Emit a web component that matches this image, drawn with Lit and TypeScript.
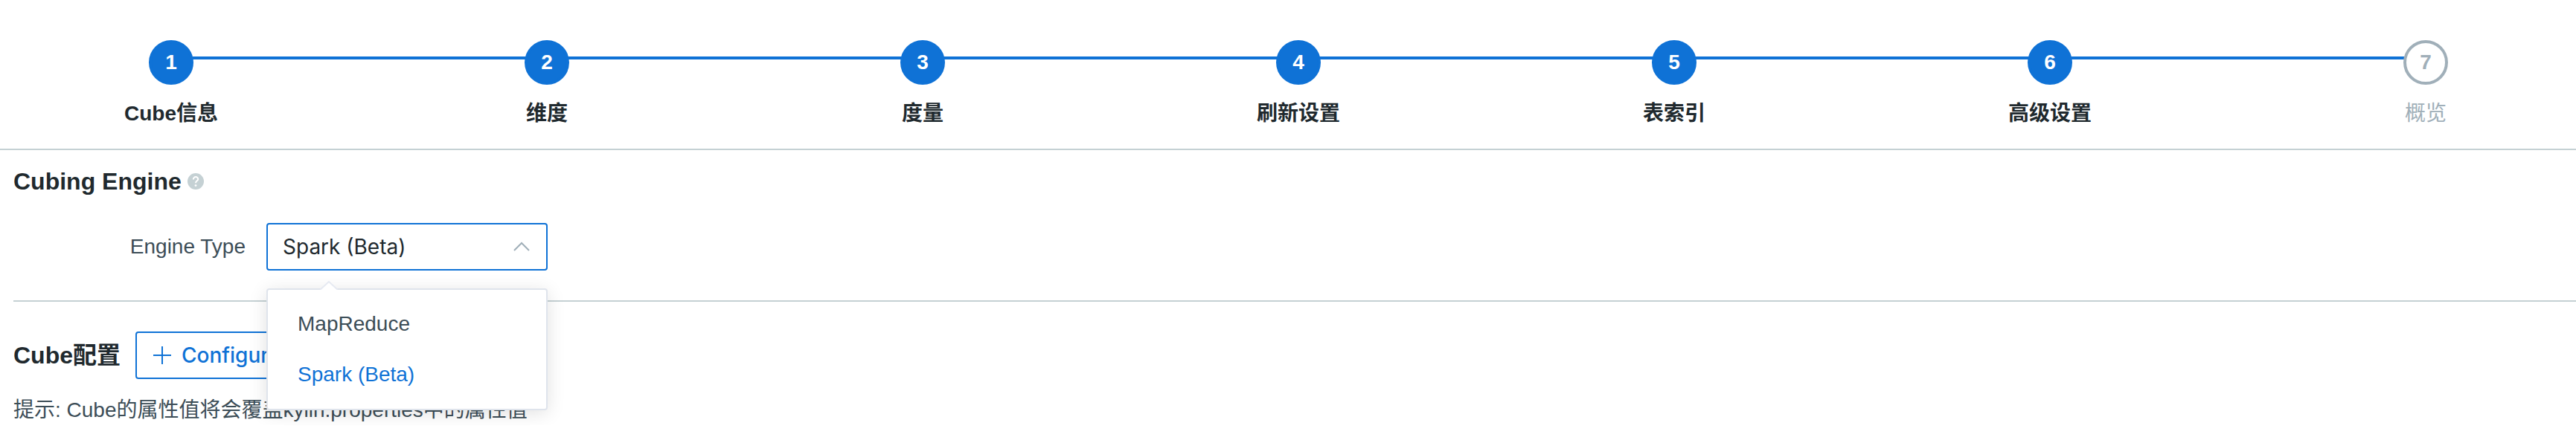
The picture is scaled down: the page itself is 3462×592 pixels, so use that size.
import { LitElement, html, css, svg } from "lit";
import { customElement, property, state } from "lit/decorators.js";
import { classMap } from "lit/directives/class-map.js";

interface Step {
  label: string;
  done: boolean;
}

const STEPS: Step[] = [
  { label: "Cube信息", done: true },
  { label: "维度", done: true },
  { label: "度量", done: true },
  { label: "刷新设置", done: true },
  { label: "表索引", done: true },
  { label: "高级设置", done: true },
  { label: "概览", done: false },
];

const ENGINES = ["MapReduce", "Spark (Beta)"];

@customElement("wizard-steps")
export class WizardSteps extends LitElement {
  @property({ attribute: false }) steps: Step[] = [];

  static styles = css`
    :host {
      display: block;
    }
    .steps {
      display: flex;
      align-items: flex-start;
      margin: 0;
      padding: 54px 172px 28px 200px;
      list-style: none;
      border-bottom: 2px solid #c5d1d4;
    }
    .step {
      display: flex;
      flex: 1 1 0;
      align-items: flex-start;
    }
    .step:last-child {
      flex: none;
    }
    .marker {
      display: flex;
      flex-direction: column;
      align-items: center;
      flex: none;
      gap: 20px;
      width: 60px;
      color: #a0afb9;
    }
    .circle {
      box-sizing: border-box;
      width: 60px;
      height: 60px;
      border: 4px solid currentColor;
      border-radius: 50%;
      font-weight: 700;
      line-height: 52px;
      text-align: center;
    }
    .label {
      line-height: 38px;
      white-space: nowrap;
    }
    .done .circle {
      border-color: #0f72d6;
      background: #0f72d6;
      color: #fff;
    }
    .done .label {
      color: #20292e;
      font-weight: 700;
    }
    .line {
      flex: 1;
      height: 4px;
      margin: 22px -1px 0;
      background: #0f72d6;
    }
  `;

  render() {
    return html`
      <ol class="steps">
        ${this.steps.map(
          (step, i) => html`
            <li class=${classMap({ step: true, done: step.done })}>
              <div class="marker">
                <span class="circle">${i + 1}</span>
                <span class="label">${step.label}</span>
              </div>
              ${i < this.steps.length - 1 ? html`<span class="line"></span>` : null}
            </li>
          `
        )}
      </ol>
    `;
  }
}

@customElement("engine-select")
export class EngineSelect extends LitElement {
  @property({ attribute: false }) options: string[] = [];
  @property() value = "";
  @property() label = "";
  @state() private open = true;

  static styles = css`
    :host {
      display: block;
    }
    .row {
      display: flex;
      align-items: center;
      gap: 28px;
    }
    .name {
      width: 312px;
      text-align: right;
    }
    .control {
      position: relative;
      width: 378px;
    }
    .field {
      display: grid;
      align-items: center;
    }
    .field > * {
      grid-area: 1 / 1;
    }
    .select {
      box-sizing: border-box;
      width: 100%;
      height: 64px;
      padding: 0 60px 0 20px;
      border: 2px solid #0f72d6;
      border-radius: 4px;
      outline: none;
      appearance: none;
      background: #fff;
      color: #20292e;
      font: 400 28px/40px Inter, "Liberation Sans", sans-serif;
    }
    .chevron {
      justify-self: end;
      width: 24px;
      height: 14px;
      margin-right: 23px;
      fill: none;
      stroke: #a0afb9;
      stroke-width: 2;
      pointer-events: none;
    }
    .popup {
      position: absolute;
      top: 88px;
      left: 0;
      right: 0;
      z-index: 1;
      border: 2px solid #dfe4ec;
      border-radius: 4px;
      background: #fff;
      box-shadow: 0 4px 24px rgba(0, 0, 0, 0.12);
    }
    .arrow {
      position: absolute;
      top: -12px;
      left: 70px;
      width: 24px;
      height: 12px;
      fill: #fff;
      stroke: #e6eaf2;
      stroke-width: 2;
    }
    .list {
      margin: 0;
      padding: 12px 0;
      list-style: none;
    }
    .option {
      padding: 0 40px;
      color: #3c4d57;
      line-height: 68px;
      cursor: pointer;
    }
    .selected {
      color: #0f72d6;
    }
  `;

  private choose(option: string) {
    this.value = option;
    this.open = false;
  }

  private toggle(event: Event) {
    event.preventDefault();
    this.open = !this.open;
  }

  render() {
    return html`
      <div class="row">
        <label class="name" for="engine">${this.label}</label>
        <div class="control">
          <div class="field">
            <select id="engine" class="select" @mousedown=${this.toggle}>
              ${this.options.map(
                (o) => html`<option .selected=${o === this.value}>${o}</option>`
              )}
            </select>
            <svg class="chevron" viewBox="0 0 24 14" aria-hidden="true">
              <path d="M2 12L12 2L22 12" />
            </svg>
          </div>
          ${this.open
            ? html`
                <div class="popup">
                  <svg class="arrow" viewBox="0 0 24 12" aria-hidden="true">
                    <path d="M0 12L12 1L24 12" />
                  </svg>
                  <ul class="list" role="listbox" aria-label=${this.label}>
                    ${this.options.map(
                      (o) => html`
                        <li
                          class=${classMap({ option: true, selected: o === this.value })}
                          role="option"
                          aria-selected=${o === this.value}
                          @click=${() => this.choose(o)}
                        >
                          ${o}
                        </li>
                      `
                    )}
                  </ul>
                </div>
              `
            : null}
        </div>
      </div>
    `;
  }
}

@customElement("app-root")
export class AppRoot extends LitElement {
  static styles = css`
    :host {
      display: block;
      background: #fff;
      color: #3c4d57;
      font: 400 28px/40px "Liberation Sans", "Noto Sans CJK SC", sans-serif;
    }
    .content {
      padding-left: 18px;
    }
    .section {
      padding: 20px 0 40px;
      border-bottom: 2px solid #c5d1d4;
    }
    .title {
      margin: 0;
      color: #20292e;
      font-size: 32px;
      font-weight: 700;
      line-height: 44px;
    }
    .heading {
      display: flex;
      align-items: center;
      gap: 8px;
      margin-bottom: 34px;
    }
    .help {
      width: 22px;
      height: 22px;
    }
    .toolbar {
      display: flex;
      align-items: center;
      gap: 20px;
      padding-top: 40px;
    }
    .add {
      display: flex;
      align-items: center;
      gap: 14px;
      height: 64px;
      padding: 0 22px;
      border: 2px solid #0f72d6;
      border-radius: 4px;
      background: #fff;
      color: #0f72d6;
      font: 500 28px/40px Inter, "Liberation Sans", sans-serif;
    }
    .plus {
      width: 24px;
      height: 24px;
      fill: none;
      stroke: currentColor;
      stroke-width: 2;
    }
    .hint {
      margin: 22px 0 0;
    }
  `;

  private helpIcon() {
    return svg`
      <circle cx="11" cy="11" r="11" fill="#c5d1d4" />
      <path d="M7.8 8.4C7.8 3.9 14.4 4.2 14.2 8.2C14.1 10.3 11 10.4 11 13.2"
        fill="none" stroke="#fff" stroke-width="2" />
      <circle cx="11" cy="16.6" r="1.4" fill="#fff" />
    `;
  }

  render() {
    return html`
      <wizard-steps .steps=${STEPS}></wizard-steps>
      <main class="content">
        <section class="section">
          <div class="heading">
            <h2 class="title">Cubing Engine</h2>
            <svg class="help" viewBox="0 0 22 22" aria-hidden="true">${this.helpIcon()}</svg>
          </div>
          <engine-select
            label="Engine Type"
            .options=${ENGINES}
            value="Spark (Beta)"
          ></engine-select>
        </section>
        <section>
          <div class="toolbar">
            <h2 class="title">Cube配置</h2>
            <button class="add" type="button">
              <svg class="plus" viewBox="0 0 24 24" aria-hidden="true">
                <path d="M0 12H24M12 0V24" />
              </svg>
              Configuration
            </button>
          </div>
          <p class="hint">提示: Cube的属性值将会覆盖kylin.properties中的属性值</p>
        </section>
      </main>
    `;
  }
}
